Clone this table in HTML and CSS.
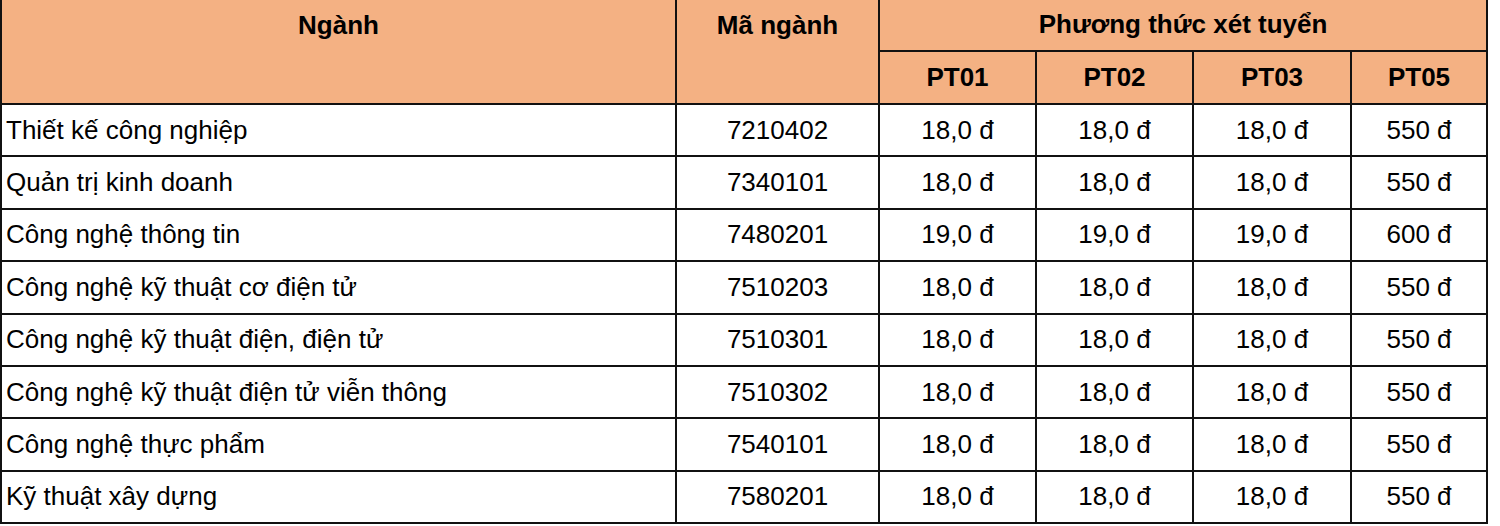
FILE: index.html
```html
<!DOCTYPE html>
<html lang="vi">
<head>
<meta charset="utf-8">
<title>Điểm chuẩn</title>
<link rel="stylesheet" href="styles.css">
</head>
<body>
<table class="scores">
  <colgroup>
    <col class="c-name">
    <col class="c-code">
    <col class="c-pt">
    <col class="c-pt">
    <col class="c-pt3">
    <col class="c-pt5">
  </colgroup>
  <thead>
    <tr class="h1">
      <th rowspan="2" class="top">Ngành</th>
      <th rowspan="2" class="top">Mã ngành</th>
      <th colspan="4" class="group">Phương thức xét tuyển</th>
    </tr>
    <tr class="h2">
      <th>PT01</th>
      <th>PT02</th>
      <th>PT03</th>
      <th>PT05</th>
    </tr>
  </thead>
  <tbody>
    <tr><td class="name">Thiết kế công nghiệp</td><td>7210402</td><td>18,0 đ</td><td>18,0 đ</td><td>18,0 đ</td><td>550 đ</td></tr>
    <tr><td class="name">Quản trị kinh doanh</td><td>7340101</td><td>18,0 đ</td><td>18,0 đ</td><td>18,0 đ</td><td>550 đ</td></tr>
    <tr><td class="name">Công nghệ thông tin</td><td>7480201</td><td>19,0 đ</td><td>19,0 đ</td><td>19,0 đ</td><td>600 đ</td></tr>
    <tr><td class="name">Công nghệ kỹ thuật cơ điện tử</td><td>7510203</td><td>18,0 đ</td><td>18,0 đ</td><td>18,0 đ</td><td>550 đ</td></tr>
    <tr><td class="name">Công nghệ kỹ thuật điện, điện tử</td><td>7510301</td><td>18,0 đ</td><td>18,0 đ</td><td>18,0 đ</td><td>550 đ</td></tr>
    <tr><td class="name">Công nghệ kỹ thuật điện tử viễn thông</td><td>7510302</td><td>18,0 đ</td><td>18,0 đ</td><td>18,0 đ</td><td>550 đ</td></tr>
    <tr><td class="name">Công nghệ thực phẩm</td><td>7540101</td><td>18,0 đ</td><td>18,0 đ</td><td>18,0 đ</td><td>550 đ</td></tr>
    <tr><td class="name">Kỹ thuật xây dựng</td><td>7580201</td><td>18,0 đ</td><td>18,0 đ</td><td>18,0 đ</td><td>550 đ</td></tr>
  </tbody>
</table>
</body>
</html>
```

FILE: styles.css
```css
html, body {
  margin: 0;
  padding: 0;
  background: #ffffff;
}

.scores {
  border-collapse: collapse;
  table-layout: fixed;
  width: 1488px;
  font-family: "Liberation Sans", Arial, sans-serif;
  font-size: 26px;
  color: #000;
  margin-top: -1px;
}

.c-name { width: 675px; }
.c-code { width: 203px; }
.c-pt { width: 157px; }
.c-pt3 { width: 158px; }
.c-pt5 { width: 136px; }

.scores th,
.scores td {
  border: 2px solid #111;
  padding: 0 5px;
  text-align: center;
  vertical-align: middle;
  white-space: nowrap;
}

.scores thead {
  background: #f4b183;
}

.scores th {
  font-weight: bold;
}

.scores .top {
  vertical-align: top;
  padding-top: 11px;
}

.h1 th { height: 51px; border-top: none; }
.h2 th { height: 51px; }

.scores tbody td {
  height: 50.4px;
}

.scores td.name {
  text-align: left;
  padding-left: 4px;
}
```
